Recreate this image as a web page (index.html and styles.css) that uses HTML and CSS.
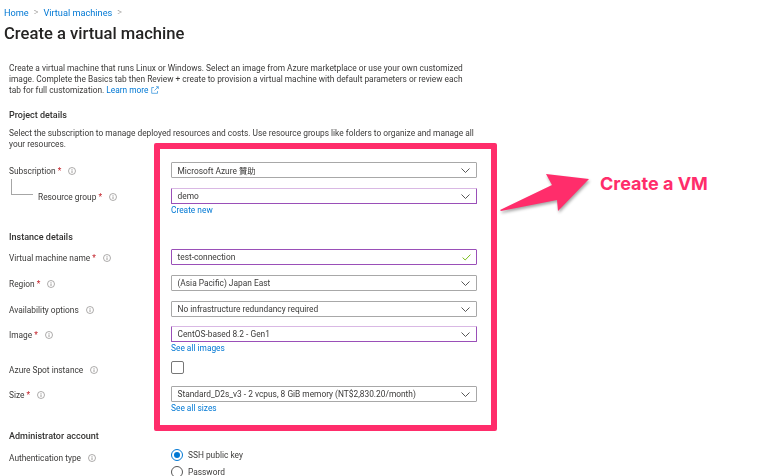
FILE: index.html
```html
<!DOCTYPE html>
<html lang="en">
<head>
<meta charset="utf-8">
<title>Create a virtual machine</title>
<link rel="stylesheet" href="styles.css">
</head>
<body>
<svg width="0" height="0" class="defs">
  <symbol id="info" viewBox="0 0 8 8"><circle cx="4" cy="4" r="3.5" fill="none" stroke="#8a8886" stroke-width=".7"/><path d="M4 3.4v2.6M4 2v.8" stroke="#8a8886" stroke-width=".8" fill="none"/></symbol>
  <symbol id="chev" viewBox="0 0 9 5"><path d="M.5.5 4.5 4.5 8.5.5" fill="none" stroke="#444" stroke-width=".9"/></symbol>
</svg>
<main class="page">
  <nav class="crumbs"><a>Home</a><span class="sep">&gt;</span><a>Virtual machines</a><span class="sep">&gt;</span></nav>
  <h1 class="title">Create a virtual machine</h1>
  <form class="form">
    <p class="intro">Create a virtual machine that runs Linux or Windows. Select an image from Azure marketplace or use your own customized image. Complete the Basics tab then Review + create to provision a virtual machine with default parameters or review each tab for full customization. <a>Learn more</a> <svg class="ext" viewBox="0 0 8 8" width="8" height="8"><path d="M3 1.5H.7v5.8h5.8V5M3.5 4.5 7.3.7M5 .7h2.3V3" fill="none" stroke="#0078d4" stroke-width=".6"/></svg></p>
    <h2 class="heading project">Project details</h2>
    <p class="note">Select the subscription to manage deployed resources and costs. Use resource groups like folders to organize and manage all your resources.</p>

    <div class="row first"><div class="label">Subscription <b>*</b><svg class="i"><use href="#info"/></svg></div><div class="field"><div class="box">Microsoft Azure 贊助<svg class="chev"><use href="#chev"/></svg></div></div></div>
    <div class="row rg"><div class="label nested">Resource group <b>*</b><svg class="i"><use href="#info"/></svg></div><div class="field"><div class="box active soft">demo<svg class="chev"><use href="#chev"/></svg></div><a class="link">Create new</a></div></div>

    <h2 class="heading instance">Instance details</h2>
    <div class="row vm"><div class="label">Virtual machine name <b>*</b><svg class="i"><use href="#info"/></svg></div><div class="field"><div class="box active">test-connection<svg class="check" viewBox="0 0 9 7" width="9" height="7"><path d="M.6 3.6 3.2 6 8.4.6" fill="none" stroke="#6bb700" stroke-width=".9"/></svg></div></div></div>
    <div class="row"><div class="label">Region <b>*</b><svg class="i"><use href="#info"/></svg></div><div class="field"><div class="box">(Asia Pacific) Japan East<svg class="chev"><use href="#chev"/></svg></div></div></div>
    <div class="row"><div class="label">Availability options<svg class="i"><use href="#info"/></svg></div><div class="field"><div class="box">No infrastructure redundancy required<svg class="chev"><use href="#chev"/></svg></div></div></div>
    <div class="row image"><div class="label">Image <b>*</b><svg class="i"><use href="#info"/></svg></div><div class="field"><div class="box active soft">CentOS-based 8.2 - Gen1<svg class="chev"><use href="#chev"/></svg></div><a class="link">See all images</a></div></div>
    <div class="row spot"><div class="label">Azure Spot instance<svg class="i"><use href="#info"/></svg></div><div class="field"><span class="checkbox"></span></div></div>
    <div class="row size"><div class="label">Size <b>*</b><svg class="i"><use href="#info"/></svg></div><div class="field"><div class="box">Standard_D2s_v3 - 2 vcpus, 8 GiB memory (NT$2,830.20/month)<svg class="chev"><use href="#chev"/></svg></div><a class="link">See all sizes</a></div></div>

    <h2 class="heading admin">Administrator account</h2>
    <div class="row auth"><div class="label">Authentication type<svg class="i"><use href="#info"/></svg></div><div class="field radios"><div class="radio on"><span class="dot"></span>SSH public key</div><div class="radio"><span class="dot"></span>Password</div></div></div>
  </form>
</main>
<div class="highlight"></div>
<svg class="arrow" viewBox="0 0 110 50" width="110" height="50"><polygon points="20,40 72,15 66,4 109,9 78,41 77,30 21,41"/></svg>
<div class="callout">Create a VM</div>
</body>
</html>
```
FILE: styles.css
```css
* { box-sizing: border-box; }
html, body { margin: 0; height: 476px; overflow: hidden; background: #fff; }
body { font-family: Roboto, "Noto Sans CJK TC", sans-serif; font-size: 8.35px; color: #3b3a39; position: relative; }
.defs { position: absolute; }
a { color: #0078d4; }
.page { padding: 6px 0 0 4px; filter: blur(.3px); }
.crumbs { display: flex; align-items: center; height: 12px; font-size: 9.2px; }
.sep { color: #8a8886; margin: 0 5px; font-size: 9px; font-weight: 300; }
.title { margin: 5px 0 0; font-size: 16.6px; line-height: 22px; font-weight: 500; color: #252423; }
.form { padding: 18px 0 0 5px; width: 480px; }
.intro { margin: 0; width: 460px; line-height: 11px; }
.ext { vertical-align: -1px; }
.heading { margin: 0; font-size: 9px; line-height: 12px; font-weight: 500; color: #323130; }
.project { margin-top: 13px; }
.note { margin: 7px 0 0; width: 470px; line-height: 11px; }
.row { display: grid; grid-template-columns: 162px 306px; margin-top: 10px; }
.row.first { margin-top: 12px; }
.label { height: 16px; padding-top: 1px; display: flex; align-items: center; position: relative; white-space: pre; }
.label b { color: #c4262e; font-weight: 400; }
.i { width: 8px; height: 8px; margin-left: 7px; flex: none; }
.nested { padding-left: 29px; }
.nested::before { content: ""; position: absolute; left: 2px; top: -9px; width: 21px; height: 15px; border-left: 1px solid #a6a6a6; border-bottom: 1px solid #a6a6a6; }
.box { height: 16px; border: 1px solid #a8a8a8; display: flex; align-items: center; justify-content: space-between; padding: 0 5px 0 5.5px; border-radius: 1px; }
.box.active { border-color: #9a4fb8; }
.box.soft { border-top-color: #d9b8e4; }
.chev { width: 9px; height: 5px; flex: none; margin-right: 1px; }
.check { flex: none; }
.link { display: block; height: 11px; line-height: 12px; color: #0078d4; }
.instance { margin-top: 16px; }
.row.vm { margin-top: 6px; }
.row.image { margin-top: 9px; }
.row.spot { margin-top: 8px; }
.checkbox { display: block; width: 13px; height: 13px; border: 1px solid #777; border-radius: 2px; }
.row.size { margin-top: 9px; }
.admin { margin-top: 17px; }
.row.auth { margin-top: 7px; }
.radios { display: flex; flex-direction: column; gap: 5px; }
.radio { display: flex; align-items: center; height: 12px; }
.dot { width: 12px; height: 12px; border: 1px solid #555; border-radius: 50%; margin-right: 5px; position: relative; flex: none; }
.radio.on .dot { border-color: #0078d4; }
.radio.on .dot::after { content: ""; position: absolute; left: 2px; top: 2px; width: 6px; height: 6px; border-radius: 50%; background: #0078d4; }
.highlight { position: absolute; left: 154px; top: 143px; width: 343px; height: 288px; border: 6px solid #ff2d6b; border-radius: 2px; }
.arrow { position: absolute; left: 480px; top: 170px; overflow: visible; filter: drop-shadow(1px 2px 1.5px rgba(0,0,0,.35)); }
.arrow polygon { fill: #ff2d6b; }
.callout { position: absolute; left: 600px; top: 174px; font-family: Inter, sans-serif; font-weight: 700; font-size: 18px; line-height: 20px; color: #ff2d6b; }
```
